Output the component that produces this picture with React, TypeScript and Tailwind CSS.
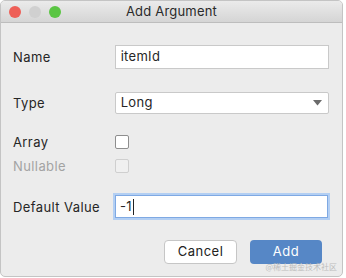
export default function App() {
  return (
    <div className="w-[346px] h-[278px] bg-white font-['Inter','Liberation_Sans',sans-serif] text-[13px] text-[#262626]">
      <div className="relative w-[343px] h-[277px] rounded-[5px] border border-[#c4c4c4] bg-[#ececec] overflow-hidden">
        <TitleBar />
        <div className="flex flex-col pl-[12px] pr-[13px] pt-[22px]">
          <Row label="Name">
            <div className="w-[215px] h-[24px] bg-white border border-[#c9c9c9] flex items-center pl-[5px] text-[13px] tracking-[0.3px]">
              itemId
            </div>
          </Row>
          <div className="h-[23px]" />
          <Row label="Type">
            <div className="w-[215px] h-[22px] bg-white border border-[#c9c9c9] rounded-[2px] flex items-center justify-between pl-[5px] pr-[6px] text-[13px] tracking-[0.3px]">
              <span>Long</span>
              <svg width="9" height="6" viewBox="0 0 9 6">
                <path d="M0 0 L9 0 L4.5 5.5 Z" fill="#6b6b6b" />
              </svg>
            </div>
          </Row>
          <div className="h-[21px]" />
          <Row label="Array">
            <div className="w-[14px] h-[14px] bg-white border border-[#8e8e8e] rounded-[2px]" />
          </Row>
          <div className="h-[10px]" />
          <Row label="Nullable" disabled>
            <div className="w-[14px] h-[14px] bg-[#f0f0f0] border border-[#cfcfcf] rounded-[2px]" />
          </Row>
          <div className="h-[22px]" />
          <Row label="Default Value">
            <div className="w-[213px] h-[23px] bg-white border border-[#7fa9e3] ring-2 ring-[#b3cff3] flex items-center pl-[4px] text-[13px] tracking-[0.3px]">
              -1<span className="ml-[1px] w-px h-[16px] bg-[#222]" />
            </div>
          </Row>
          <div className="h-[22px]" />
          <div className="flex justify-end gap-[13px] pr-[7px]">
            <button className="w-[73px] h-[24px] bg-white border border-[#c6c6c6] rounded-[4px] text-[13px] tracking-[0.5px] text-[#222]">
              Cancel
            </button>
            <button className="w-[72px] h-[24px] bg-[#5687c6] rounded-[4px] text-[13px] tracking-[0.5px] text-white">
              Add
            </button>
          </div>
        </div>
        <span className="absolute right-[5px] bottom-[4px] text-[8px] leading-[10px] text-[#bdbdbd] font-['Noto_Sans_CJK_SC',sans-serif]">
          @稀土掘金技术社区
        </span>
      </div>
    </div>
  );
}

function TitleBar() {
  return (
    <div className="relative h-[22px] bg-gradient-to-b from-[#ebebeb] to-[#d5d5d5] border-b border-[#bdbdbd] flex items-center justify-center">
      <div className="absolute left-[8px] top-[5px] flex gap-[8px]">
        <span className="w-[12px] h-[12px] rounded-full bg-[#ee5f57]" />
        <span className="w-[12px] h-[12px] rounded-full bg-[#d0d0d0]" />
        <span className="w-[12px] h-[12px] rounded-full bg-[#5ac543]" />
      </div>
      <span className="text-[13px] tracking-[0.2px] text-[#2a2a2a]">Add Argument</span>
    </div>
  );
}

function Row({ label, disabled, children }: { label: string; disabled?: boolean; children: React.ReactNode }) {
  return (
    <div className="flex items-center">
      <span className={`w-[102px] leading-[14px] tracking-[0.4px] ${disabled ? "text-[#a3a3a3]" : "text-[#262626]"}`}>{label}</span>
      {children}
    </div>
  );
}
